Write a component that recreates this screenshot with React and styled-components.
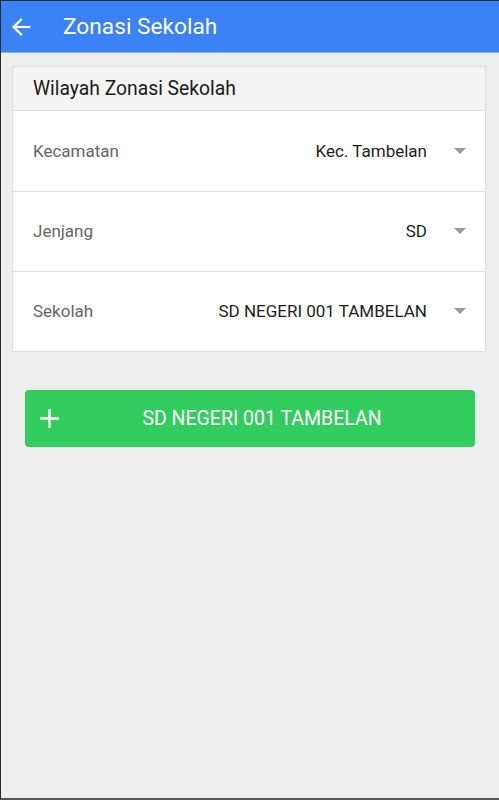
import React from 'react';
import styled, { createGlobalStyle } from 'styled-components';

const GlobalStyle = createGlobalStyle`
  html, body { margin: 0; padding: 0; }
  body { font-family: Roboto, "Noto Sans", sans-serif; }
  * { box-sizing: border-box; }
`;

const Screen = styled.div`
  width: 499px;
  height: 800px;
  background: #eeeeee;
  border-top: 1px solid #1f2733;
  border-left: 1px solid #2a2a2a;
  border-bottom: 2px solid #555;
  display: flex;
  flex-direction: column;
  overflow: hidden;
`;

const AppBar = styled.header`
  height: 52px;
  background: #3a82f6;
  border-bottom: 1px solid #8ab4f0;
  display: flex;
  align-items: center;
  padding-left: 9px;
  gap: 31px;
  color: #fff;
`;

const BackButton = styled.button`
  border: 0;
  background: none;
  padding: 0;
  width: 22px;
  height: 22px;
  color: #fff;
  display: flex;
`;

const Title = styled.h1`
  margin: 0;
  font-size: 22.7px;
  font-weight: 400;
`;

const Content = styled.main`
  padding: 13px 13px 0 11px;
`;

const Card = styled.section`
  background: #fff;
  border: 1px solid #dddddd;
`;

const CardTitle = styled.div`
  height: 44px;
  background: #f4f4f4;
  border-bottom: 1px solid #dddddd;
  display: flex;
  align-items: center;
  padding-left: 20px;
  font-size: 19.3px;
  color: #1a1a1a;
`;

const Row = styled.div`
  height: 80px;
  display: flex;
  align-items: center;
  padding: 0 19px 1px 20px;
  border-top: ${({ first }) => (first ? '0' : '1px solid #e0e0e0')};
`;

const Label = styled.span`
  font-size: 17px;
  color: #666;
  flex: 1;
`;

const Value = styled.span`
  font-size: 17px;
  color: #1e1e1e;
  margin-right: 27px;
`;

const Caret = styled.span`
  width: 0;
  height: 0;
  border-left: 6px solid transparent;
  border-right: 6px solid transparent;
  border-top: 6px solid #9a9a9a;
`;

const AddButton = styled.button`
  margin: 38px 24px 0 24px;
  height: 57px;
  border: 0;
  border-radius: 4px;
  background: #33cc5f;
  color: #fff;
  font-family: inherit;
  font-size: 19.5px;
  display: flex;
  align-items: center;
  padding: 0 15px;
`;

const PlusIcon = styled.svg`
  width: 19px;
  height: 19px;
  flex: none;
`;

const ButtonText = styled.span`
  flex: 1;
  text-align: center;
  padding-left: 5px;
`;

const fields = [
  { label: 'Kecamatan', value: 'Kec. Tambelan' },
  { label: 'Jenjang', value: 'SD' },
  { label: 'Sekolah', value: 'SD NEGERI 001 TAMBELAN' },
];

export default function App() {
  return (
    <>
      <GlobalStyle />
      <Screen>
        <AppBar>
          <BackButton aria-label="Kembali">
            <svg viewBox="0 0 24 24" width="22" height="22" fill="none" stroke="currentColor" strokeWidth="2.4" strokeLinecap="square">
              <path d="M21 12H4" />
              <path d="M12 4l-8 8 8 8" />
            </svg>
          </BackButton>
          <Title>Zonasi Sekolah</Title>
        </AppBar>
        <Content>
          <Card>
            <CardTitle>Wilayah Zonasi Sekolah</CardTitle>
            {fields.map((f, i) => (
              <Row key={f.label} first={i === 0}>
                <Label>{f.label}</Label>
                <Value>{f.value}</Value>
                <Caret />
              </Row>
            ))}
          </Card>
        </Content>
        <AddButton>
          <PlusIcon viewBox="0 0 19 19" stroke="#fff" strokeWidth="2.4">
            <path d="M9.5 0v19M0 9.5h19" />
          </PlusIcon>
          <ButtonText>SD NEGERI 001 TAMBELAN</ButtonText>
        </AddButton>
      </Screen>
    </>
  );
}
